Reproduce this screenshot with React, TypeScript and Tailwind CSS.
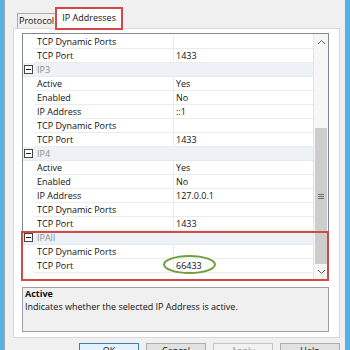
import React from 'react';

type Row = { name: string; value?: string; category?: boolean };

const rows: Row[] = [
  { name: 'TCP Dynamic Ports' },
  { name: 'TCP Port', value: '1433' },
  { name: 'IP3', category: true },
  { name: 'Active', value: 'Yes' },
  { name: 'Enabled', value: 'No' },
  { name: 'IP Address', value: '::1' },
  { name: 'TCP Dynamic Ports' },
  { name: 'TCP Port', value: '1433' },
  { name: 'IP4', category: true },
  { name: 'Active', value: 'Yes' },
  { name: 'Enabled', value: 'No' },
  { name: 'IP Address', value: '127.0.0.1' },
  { name: 'TCP Dynamic Ports' },
  { name: 'TCP Port', value: '1433' },
  { name: 'IPAll', category: true },
  { name: 'TCP Dynamic Ports' },
  { name: 'TCP Port', value: '66433' },
];

const Collapse = () => (
  <div className="w-[9px] h-[9px] border border-[#444] bg-white flex items-center justify-center">
    <div className="w-[5px] h-px bg-[#222]" />
  </div>
);

const Chevron = ({ down }: { down?: boolean }) => (
  <svg width="9" height="6" viewBox="0 0 9 6" className={down ? 'rotate-180' : ''}>
    <path d="M1 5 L4.5 1.5 L8 5" fill="none" stroke="#606060" strokeWidth="1" />
  </svg>
);

function GridRow({ row }: { row: Row }) {
  if (row.category) {
    return (
      <div className="flex h-[14px] bg-[#eef1f5] border-b border-[#e6e9ee]">
        <div className="w-[11px] flex items-center justify-center">
          <Collapse />
        </div>
        <div className="pl-[3px] leading-[13px] text-[#8d8d8d]">{row.name}</div>
      </div>
    );
  }
  return (
    <div className="flex h-[14px]">
      <div className="w-[11px] bg-white" />
      <div className="w-[140px] pl-[3px] leading-[13px] text-[#111] border-b border-r border-[#ececec]">{row.name}</div>
      <div className="flex-1 pl-[2px] leading-[13px] text-[#111] border-b border-[#ececec]">{row.value}</div>
    </div>
  );
}

export default function App() {
  return (
    <div className="relative w-[350px] h-[350px] overflow-hidden bg-[#53b3e1] font-['Open_Sans',sans-serif] text-[9px]">
      <div className="ml-[4px] w-[341px] h-[350px] bg-[#f0f0f0] border-l border-[#9aa8b3] pl-[8px]">
        {/* tabs */}
        <div className="flex items-end h-[28px] pl-[4px]">
          <div className="h-[15px] pl-[1px] pr-[2px] border border-b-0 border-[#acacac] bg-[#f0f0f0] leading-[14px] text-[#111] whitespace-nowrap">
            Protocol
          </div>
          <div className="relative z-10 -ml-[2px] -mb-[2px] h-[23px] w-[68px] border-2 border-[#d24a48] bg-white leading-[18px] text-center text-[#111] whitespace-nowrap">
            IP Addresses
          </div>
        </div>

        {/* panel */}
        <div className="w-[327px] h-[310px] border border-[#d9d9d9] bg-white pl-[8px] pt-[4px] pr-[10px]">
          <div className="relative flex h-[247px] border border-[#828790] bg-white">
            <div className="w-[290px] pt-[1px] overflow-hidden">
              {rows.map((r, i) => (
                <GridRow key={i} row={r} />
              ))}
            </div>
            <div className="w-[15px] flex flex-col bg-[#f6f6f6] border-l border-[#e4e4e4]">
              <div className="h-[16px] flex items-center justify-center">
                <Chevron />
              </div>
              <div className="h-[78px]" />
              <div className="h-[136px] mx-[1px] bg-[#cdcdcd] flex flex-col items-center justify-center gap-[1px]">
                <div className="w-[6px] h-px bg-[#6d6d6d]" />
                <div className="w-[6px] h-px bg-[#6d6d6d]" />
                <div className="w-[6px] h-px bg-[#6d6d6d]" />
              </div>
              <div className="flex-1 flex items-center justify-center">
                <Chevron down />
              </div>
            </div>

            {/* annotations */}
            <div className="absolute left-[-2px] top-[197px] w-[308px] h-[50px] border-2 border-[#d24a48]" />
            <div className="absolute left-[140px] top-[221px] w-[53px] h-[19px] rounded-[50%] border-2 border-[#6f9f3c]" />
          </div>

          {/* description */}
          <div className="mt-[7px] h-[45px] border border-[#a0a0a0] bg-[#f0f0f0] pl-[2px] text-[#111]">
            <div className="font-bold leading-[11px]">Active</div>
            <div className="leading-[13px] mt-[1px]">Indicates whether the selected IP Address is active.</div>
          </div>
        </div>

        {/* buttons */}
        <div className="w-[327px] flex justify-end gap-[7px] mt-[5px]">
          <div className="w-[60px] h-[22px] border border-[#3c7fb1] bg-[#e5f1fb] text-center leading-[12px] pt-[1px] text-[#111]">OK</div>
          <div className="w-[60px] h-[22px] border border-[#adadad] bg-[#e1e1e1] text-center leading-[12px] pt-[1px] text-[#111]">Cancel</div>
          <div className="w-[60px] h-[22px] border border-[#c4c4c4] bg-[#f2f2f2] text-center leading-[12px] pt-[1px] text-[#9a9a9a]">Apply</div>
          <div className="w-[60px] h-[22px] border border-[#adadad] bg-[#e1e1e1] text-center leading-[12px] pt-[1px] text-[#111]">Help</div>
        </div>
      </div>
    </div>
  );
}
